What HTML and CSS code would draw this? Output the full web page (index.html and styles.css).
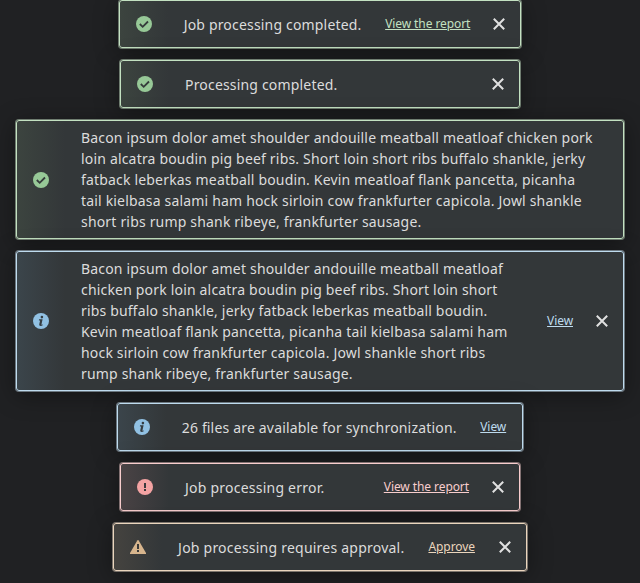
FILE: index.html
```
<!DOCTYPE html>
<html lang="en">
<head>
<meta charset="utf-8">
<title>Notifications</title>
<link rel="stylesheet" href="styles.css">
</head>
<body>
<svg class="symbols" aria-hidden="true">
  <symbol id="check" viewBox="0 0 16 16"><circle cx="8" cy="8" r="8" fill="currentColor"/><path d="M3.8 8l2.9 2.8 5.3-5.3" fill="none" stroke="#353c3b" stroke-width="1.8"/></symbol>
  <symbol id="info" viewBox="0 0 16 16"><circle cx="8" cy="8" r="8" fill="currentColor"/><circle cx="8.9" cy="4.1" r="1.3" fill="#353d42"/><path d="M6 6.3h3.6L8.5 11.3q-.1.6.4.5l1-.4-.2.8q-1 .8-2.1.8-1.7 0-1.4-1.4l.9-4.2H5.9z" fill="#353d42"/></symbol>
  <symbol id="error" viewBox="0 0 16 16"><circle cx="8" cy="8" r="8" fill="currentColor"/><path d="M7 4h2v5H7zM7 10h2v2H7z" fill="#3b3a3d"/></symbol>
  <symbol id="warning" viewBox="0 0 16 16"><path d="M7.3 1.6Q8 .6 8.7 1.6L16 14v1H0v-1z" fill="currentColor"/><path d="M7 5h2v5H7zM7 11h2v2H7z" fill="#3b3a38"/></symbol>
  <symbol id="close" viewBox="0 0 12 12"><path d="M.8.8l10.4 10.4M11.2.8L.8 11.2" fill="none" stroke="currentColor" stroke-width="2"/></symbol>
</svg>
<main class="toasts">
  <div class="toast success">
    <svg class="icon"><use href="#check"/></svg>
    <p class="message">Job processing completed.</p>
    <a class="action" href="#">View the report</a>
    <button class="close" aria-label="Close"><svg><use href="#close"/></svg></button>
  </div>
  <div class="toast success">
    <svg class="icon"><use href="#check"/></svg>
    <p class="message">Processing completed.</p>
    <button class="close" aria-label="Close"><svg><use href="#close"/></svg></button>
  </div>
  <div class="toast success">
    <svg class="icon"><use href="#check"/></svg>
    <p class="message">Bacon ipsum dolor amet shoulder andouille meatball meatloaf chicken pork loin alcatra boudin pig beef ribs. Short loin short ribs buffalo shankle, jerky fatback leberkas meatball boudin. Kevin meatloaf flank pancetta, picanha tail kielbasa salami ham hock sirloin cow frankfurter capicola. Jowl shankle short ribs rump shank ribeye, frankfurter sausage.</p>
  </div>
  <div class="toast info">
    <svg class="icon"><use href="#info"/></svg>
    <p class="message">Bacon ipsum dolor amet shoulder andouille meatball meatloaf chicken pork loin alcatra boudin pig beef ribs. Short loin short ribs buffalo shankle, jerky fatback leberkas meatball boudin. Kevin meatloaf flank pancetta, picanha tail kielbasa salami ham hock sirloin cow frankfurter capicola. Jowl shankle short ribs rump shank ribeye, frankfurter sausage.</p>
    <a class="action" href="#">View</a>
    <button class="close" aria-label="Close"><svg><use href="#close"/></svg></button>
  </div>
  <div class="toast info">
    <svg class="icon"><use href="#info"/></svg>
    <p class="message">26 files are available for synchronization.</p>
    <a class="action" href="#">View</a>
  </div>
  <div class="toast error">
    <svg class="icon"><use href="#error"/></svg>
    <p class="message">Job processing error.</p>
    <a class="action" href="#">View the report</a>
    <button class="close" aria-label="Close"><svg><use href="#close"/></svg></button>
  </div>
  <div class="toast warning">
    <svg class="icon"><use href="#warning"/></svg>
    <p class="message">Job processing requires approval.</p>
    <a class="action" href="#">Approve</a>
    <button class="close" aria-label="Close"><svg><use href="#close"/></svg></button>
  </div>
</main>
</body>
</html>
```
FILE: styles.css
```
* { box-sizing: border-box; }
body {
  margin: 0;
  height: 583px;
  overflow: hidden;
  background: #202123;
  color: #e0e0e0;
  font-family: "Noto Sans", sans-serif;
}
.symbols { display: none; }
.toasts {
  display: flex;
  flex-direction: column;
  align-items: center;
  gap: 12px;
  padding: 0 16px;
}
.toast {
  display: flex;
  align-items: center;
  min-width: 400px;
  max-width: 608px;
  min-height: 48px;
  padding: 6px 16px;
  border: 1px solid var(--line);
  border-radius: 3px;
  background: linear-gradient(90deg, var(--tint), #333739 48px);
  box-shadow: 0 0 0 1px var(--edge), 0 4px 24px rgba(0, 0, 0, 0.4);
}
.success { --line: #c3e1c1; --edge: #6f7d70; --tint: #3c443f; --accent: #97c997; --link: #c3e1c1; }
.info { --line: #bedbee; --edge: #6c7881; --tint: #3b454b; --accent: #91c1e3; --link: #bedbee; }
.error { --line: #f8cdcd; --edge: #837273; --tint: #4a4345; --accent: #f4a3a3; --link: #f8cdcd; }
.warning { --line: #ead5bd; --edge: #7d756d; --tint: #45433f; --accent: #d7b58d; --link: #ead5bd; }
.icon {
  flex: none;
  width: 16px;
  height: 16px;
  margin-right: 32px;
  color: var(--accent);
}
.message {
  flex: 1;
  margin: 0;
  padding-right: 15.6px;
  color: #dcdcdc;
  font-size: 14px;
  line-height: 21px;
  letter-spacing: 0.18px;
  font-feature-settings: "liga" 1;
}
.message:last-child { padding-right: 10px; }
.warning .message, .error .message { letter-spacing: 0.23px; }
.warning .message { padding-right: 16px; }
.action {
  flex: none;
  margin-left: 8px;
  color: var(--link);
  font-size: 12px;
  line-height: 18px;
  letter-spacing: -0.08px;
}
.close {
  flex: none;
  display: grid;
  place-items: center;
  width: 24px;
  height: 24px;
  margin: 0 -7px 0 17px;
  padding: 0;
  border: 0;
  background: none;
  color: #e0e0e0;
}
.warning .close { margin-left: 18px; }
.close svg { width: 12px; height: 12px; }
```
